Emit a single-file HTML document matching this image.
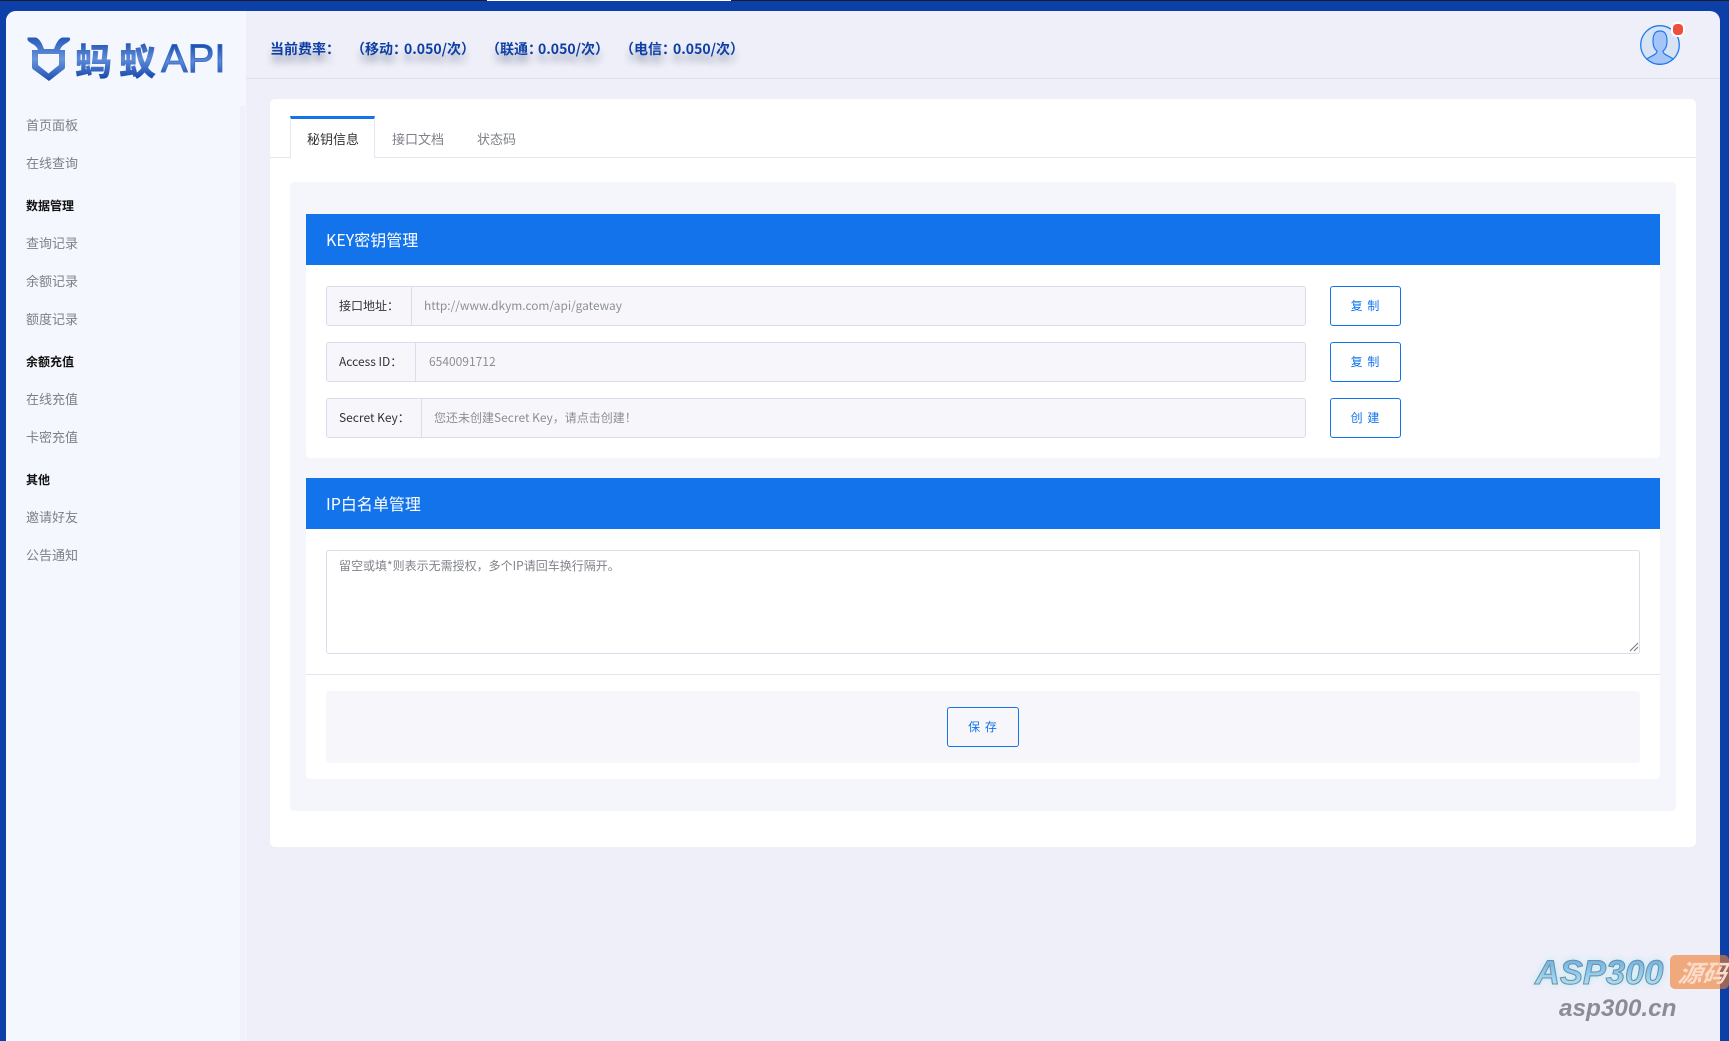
<!DOCTYPE html>
<html lang="zh-CN"><head><meta charset="utf-8"><title>蚂蚁API</title>
<style>
*{box-sizing:border-box;margin:0;padding:0}
html,body{width:1729px;height:1030px;overflow:hidden;background:#0c3fa8;font-family:"Noto Sans CJK SC","Liberation Sans",sans-serif}
.a{position:absolute}
.t{position:absolute;line-height:20px;white-space:nowrap}
.nav{font-size:13px;color:#7d8087;left:26px}
.grp{font-size:12px;font-weight:700;color:#111;left:26px}
.hd{font-size:14px;font-weight:700;color:#0e3fa6;top:39px;text-shadow:0 8px 7px rgba(20,30,70,.32)}
.tab{font-size:13px;color:#7d8087;top:129px}
.bar{position:absolute;left:306px;width:1354px;height:51px;background:#1273eb}
.title{font-size:16px;color:#fff;left:326px}
.inp{position:absolute;left:326px;width:980px;height:40px;background:#f7f7fb;border:1px solid #dddceb;border-radius:3px}
.lab{position:absolute;left:0;top:0;bottom:0;border-right:1px solid #dddceb}
.lt{font-size:12px;color:#333;left:339px}
.val{font-size:12px;color:#8b8f96}
.btn{position:absolute;width:71px;height:40px;left:1330px;background:#fff;border:1px solid #1273eb;border-radius:3px;color:#1273eb;font-size:12px;line-height:38px;text-align:center;letter-spacing:1px}
</style></head><body>
<div class="a" style="left:0;top:0;width:1729px;height:1px;background:#1a1d2b"></div>
<div class="a" style="left:487px;top:0;width:244px;height:1px;background:#fff"></div>

<div class="a" style="left:6px;top:11px;width:1714px;height:1030px;background:#eeeff8;border-radius:10px 10px 0 0;overflow:hidden">
  <div class="a" style="left:0;top:0;width:240px;height:1030px;background:#f5f7fe"></div>
  <div class="a" style="left:234px;top:95px;width:5px;height:935px;background:#eff0f9"></div>
  <div class="a" style="left:240px;top:67px;width:1474px;height:1px;background:#dfe0ec"></div>
</div>

<svg class="a" style="left:0;top:0" width="80" height="90" viewBox="0 0 80 90">
<defs><linearGradient id="g2" gradientUnits="userSpaceOnUse" x1="0" y1="37" x2="0" y2="81"><stop offset="0" stop-color="#2458b8"/><stop offset=".5" stop-color="#6a95dc"/><stop offset="1" stop-color="#1c4eb2"/></linearGradient></defs>
<path fill="url(#g2)" d="M27.500 38Q27 37.500 28 37.500H36C40 39 42 44 44 49H54C56 44 58 39 62 37.500H69Q70.500 38 70 40C67 44 62 44 60 50H65V67Q65 69 63 70L49 81L34 70Q32 69 32 67V50H38C36 44 30 44 27.500 40Z"/>
<path fill="#f5f7fe" d="M38 54H59V65L48.500 73.500L38 65Z"/>
</svg>
<div class="t" style="left:75px;top:33px;height:52px;font-size:37px;line-height:52px;font-weight:900;letter-spacing:7px;color:transparent;background:linear-gradient(180deg,#1f52b4 15%,#5f8cd8 50%,#1b4db1 85%);-webkit-background-clip:text;background-clip:text">蚂蚁</div>
<div class="t" style="left:161px;top:34px;height:50px;font-family:'Liberation Sans',sans-serif;font-size:40px;line-height:50px;color:transparent;background:linear-gradient(180deg,#1f52b4 25%,#5f8cd8 55%,#1b4db1 85%);-webkit-background-clip:text;background-clip:text;-webkit-text-stroke:.8px #3a6cc4">API</div>

<div class="t nav" style="top:115px">首页面板</div>
<div class="t nav" style="top:153px">在线查询</div>
<div class="t grp" style="top:196px">数据管理</div>
<div class="t nav" style="top:233px">查询记录</div>
<div class="t nav" style="top:271px">余额记录</div>
<div class="t nav" style="top:309px">额度记录</div>
<div class="t grp" style="top:352px">余额充值</div>
<div class="t nav" style="top:389px">在线充值</div>
<div class="t nav" style="top:427px">卡密充值</div>
<div class="t grp" style="top:470px">其他</div>
<div class="t nav" style="top:507px">邀请好友</div>
<div class="t nav" style="top:545px">公告通知</div>

<div class="t hd" style="left:270px">当前费率：</div>
<div class="t hd" style="left:351px">（移动：</div><div class="t hd" style="left:404px">0.050/次）</div>
<div class="t hd" style="left:486px">（联通：</div><div class="t hd" style="left:538px">0.050/次）</div>
<div class="t hd" style="left:620px">（电信：</div><div class="t hd" style="left:673px">0.050/次）</div>

<svg class="a" style="left:1636px;top:20px" width="50" height="50" viewBox="0 0 50 50">
<circle cx="24" cy="25" r="19.3" fill="#d9e3f4" stroke="#1e7bf0" stroke-width="1.3"/>
<path d="M11 39C14 36 21 35 21 31C18 29 17 26 17 21C17 13 20 11 24 11C28 11 31 13 31 21C31 26 30 29 27 31C27 35 34 36 37 39C30 46 18 46 11 39Z" fill="#a5c4f7" stroke="#1e7bf0" stroke-width="1.2"/>
</svg>
<div class="a" style="left:1671px;top:22px;width:14px;height:15px;background:#ee4e3b;border:2px solid #fff;border-radius:6px"></div>

<div class="a" style="left:270px;top:99px;width:1426px;height:748px;background:#fff;border-radius:5px"></div>
<div class="a" style="left:270px;top:157px;width:1426px;height:1px;background:#e4e5f1"></div>
<div class="a" style="left:290px;top:116px;width:85px;height:42px;background:#fff;border:1px solid #e4e5f1;border-top:3px solid #1273eb;border-bottom:0"></div>
<div class="t tab" style="left:307px;color:#333">秘钥信息</div>
<div class="t tab" style="left:392px">接口文档</div>
<div class="t tab" style="left:477px">状态码</div>

<div class="a" style="left:290px;top:182px;width:1386px;height:629px;background:#f5f6fb;border-radius:4px"></div>
<div class="a" style="left:306px;top:214px;width:1354px;height:244px;background:#fff;border-radius:0 0 4px 4px"></div>
<div class="bar" style="top:214px"></div>
<div class="t title" style="top:229px">KEY密钥管理</div>

<div class="inp" style="top:286px"><div class="lab" style="width:85px"></div></div>
<div class="t lt" style="top:296px">接口地址：</div>
<div class="t val" style="left:424px;top:296px;font-size:11.9px">http://www.dkym.com/api/gateway</div>
<div class="inp" style="top:342px"><div class="lab" style="width:89px"></div></div>
<div class="t lt" style="top:352px">Access ID：</div>
<div class="t val" style="left:429px;top:352px">6540091712</div>
<div class="inp" style="top:398px"><div class="lab" style="width:95px"></div></div>
<div class="t lt" style="top:408px">Secret Key：</div>
<div class="t val" style="left:434px;top:408px">您还未创建Secret Key，请点击创建！</div>
<div class="btn" style="top:286px">复 制</div>
<div class="btn" style="top:342px">复 制</div>
<div class="btn" style="top:398px">创 建</div>

<div class="a" style="left:306px;top:478px;width:1354px;height:301px;background:#fff;border-radius:0 0 4px 4px"></div>
<div class="bar" style="top:478px"></div>
<div class="t title" style="top:493px">IP白名单管理</div>
<div class="a" style="left:326px;top:550px;width:1314px;height:104px;background:#fff;border:1px solid #dddceb;border-radius:3px"></div>
<div class="t" style="left:339px;top:556px;font-size:12px;color:#80838a">留空或填*则表示无需授权，多个IP请回车换行隔开。</div>
<svg class="a" style="left:1629px;top:642px" width="10" height="10"><path d="M1 9L9 1M5 9L9 5" stroke="#777" stroke-width="1" fill="none"/></svg>
<div class="a" style="left:306px;top:674px;width:1354px;height:1px;background:#e2e4ee"></div>
<div class="a" style="left:326px;top:691px;width:1314px;height:72px;background:#f7f7fb;border-radius:3px"></div>
<div class="btn" style="left:947px;top:707px;width:72px;background:transparent">保 存</div>

<div class="t" style="left:1535px;top:953px;height:40px;line-height:40px;font-family:'Liberation Sans',sans-serif;font-size:34.500px;font-weight:700;font-style:italic;color:transparent;background:linear-gradient(180deg,#5aa9e6,#bfeffc);-webkit-background-clip:text;background-clip:text;-webkit-text-stroke:1px #7d8a9a;filter:drop-shadow(0 0 3px #b5ecfb)">ASP300</div>
<div class="a" style="left:1670px;top:955px;width:59px;height:34px;background:rgba(240,125,50,.62);border-radius:5px"></div>
<div class="t" style="left:1679px;top:962px;font-size:24px;font-weight:700;font-style:italic;color:#fbdcc8;transform:skewX(-10deg)">源码</div>
<div class="t" style="left:1559px;top:996px;height:26px;line-height:26px;font-family:'Liberation Sans',sans-serif;font-size:24.300px;font-weight:700;font-style:italic;color:#8c8c94">asp300.cn</div>
</body></html>
